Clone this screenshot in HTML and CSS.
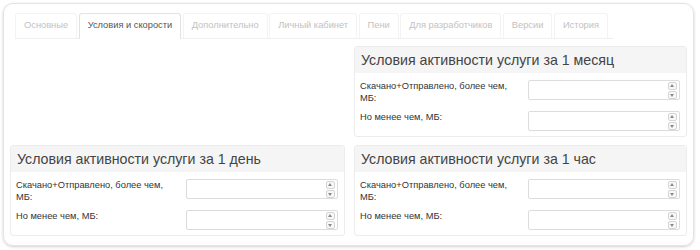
FILE: index.html
```html
<!DOCTYPE html>
<html lang="ru">
<head>
    <meta charset="UTF-8">
    <title>Условия и скорости</title>
    <link rel="stylesheet" href="styles.css">
</head>
<body>
    <div class="card">
        <ul class="tabs">
            <li class="tab">Основные</li>
            <li class="tab active">Условия и скорости</li>
            <li class="tab">Дополнительно</li>
            <li class="tab">Личный кабинет</li>
            <li class="tab">Пени</li>
            <li class="tab">Для разработчиков</li>
            <li class="tab">Версии</li>
            <li class="tab">История</li>
        </ul>

        <div class="grid">
            <div class="cell-empty"></div>

            <div class="panel">
                <div class="panel-head">Условия активности услуги за 1 месяц</div>
                <div class="panel-body">
                    <div class="row">
                        <label>Скачано+Отправлено, более чем, МБ:</label>
                        <div class="num-field"><span class="spin"><i class="up"></i><i class="down"></i></span></div>
                    </div>
                    <div class="row">
                        <label>Но менее чем, МБ:</label>
                        <div class="num-field"><span class="spin"><i class="up"></i><i class="down"></i></span></div>
                    </div>
                </div>
            </div>

            <div class="panel">
                <div class="panel-head">Условия активности услуги за 1 день</div>
                <div class="panel-body">
                    <div class="row">
                        <label>Скачано+Отправлено, более чем, МБ:</label>
                        <div class="num-field"><span class="spin"><i class="up"></i><i class="down"></i></span></div>
                    </div>
                    <div class="row">
                        <label>Но менее чем, МБ:</label>
                        <div class="num-field"><span class="spin"><i class="up"></i><i class="down"></i></span></div>
                    </div>
                </div>
            </div>

            <div class="panel">
                <div class="panel-head">Условия активности услуги за 1 час</div>
                <div class="panel-body">
                    <div class="row">
                        <label>Скачано+Отправлено, более чем, МБ:</label>
                        <div class="num-field"><span class="spin"><i class="up"></i><i class="down"></i></span></div>
                    </div>
                    <div class="row">
                        <label>Но менее чем, МБ:</label>
                        <div class="num-field"><span class="spin"><i class="up"></i><i class="down"></i></span></div>
                    </div>
                </div>
            </div>
        </div>
    </div>
</body>
</html>
```

FILE: styles.css
```css
/* Base */
body {
    margin: 0;
    background: #fff;
    font-family: Arial, "Liberation Sans", Helvetica, sans-serif;
    color: #333;
}

.card {
    margin: 3px;
    width: 677px;
    height: 227px;
    padding: 9px 6px 5px 6px;
    border: 1px solid #e4e4e4;
    border-radius: 10px;
    box-shadow: 0 1px 3px rgba(0, 0, 0, 0.18);
}

/* Tabs */
.tabs {
    display: flex;
    gap: 1.5px;
    list-style: none;
    margin: 0 0 0 5px;
    padding: 0;
    width: 598px;
    border-bottom: 1px solid #f0f0f0;
}

.tab {
    font-size: 9.3px;
    line-height: 11px;
    white-space: nowrap;
    color: #c2c2c2;
    padding: 6px 8px 7px;
    border: 1px solid #f3f3f3;
    border-bottom: none;
    border-radius: 3px 3px 0 0;
}

.tab.active {
    color: #555;
    border-color: #e3e3e3;
    background: #fff;
    margin-bottom: -1px;
}

/* Panels */
.grid {
    display: grid;
    grid-template-columns: 335px 333px;
    column-gap: 9px;
    row-gap: 8px;
    margin-top: 7px;
}

.panel {
    border: 1px solid #ececec;
    border-radius: 3px;
}

.panel-head {
    background: #f5f5f5;
    height: 26px;
    line-height: 26px;
    padding: 0 6px;
    font-size: 14.2px;
    white-space: nowrap;
    color: #444;
}

.panel-body {
    padding: 7px 6px 5px 5px;
}

.row {
    display: flex;
    align-items: flex-start;
    margin-bottom: 7px;
}

.row:last-child {
    margin-bottom: 0;
}

.row label {
    flex: 1;
    font-size: 9.3px;
    line-height: 12px;
    padding-right: 14px;
}

.num-field {
    width: 148px;
    height: 18px;
    border: 1px solid #dcdcdc;
    border-radius: 2px;
    display: flex;
    justify-content: flex-end;
    align-items: center;
    padding-right: 2px;
}

.spin {
    display: flex;
    flex-direction: column;
    gap: 1px;
}

.spin i {
    display: block;
    width: 7px;
    height: 6px;
    border: 1px solid #d4d4d4;
    border-radius: 2px;
    background: #f8f8f8;
    position: relative;
}

.spin i::after {
    content: "";
    position: absolute;
    left: 1px;
    width: 0;
    height: 0;
    border-left: 2.5px solid transparent;
    border-right: 2.5px solid transparent;
}

.spin .up::after {
    top: 1px;
    border-bottom: 3px solid #8a8a8a;
}

.spin .down::after {
    top: 2px;
    border-top: 3px solid #8a8a8a;
}
```
